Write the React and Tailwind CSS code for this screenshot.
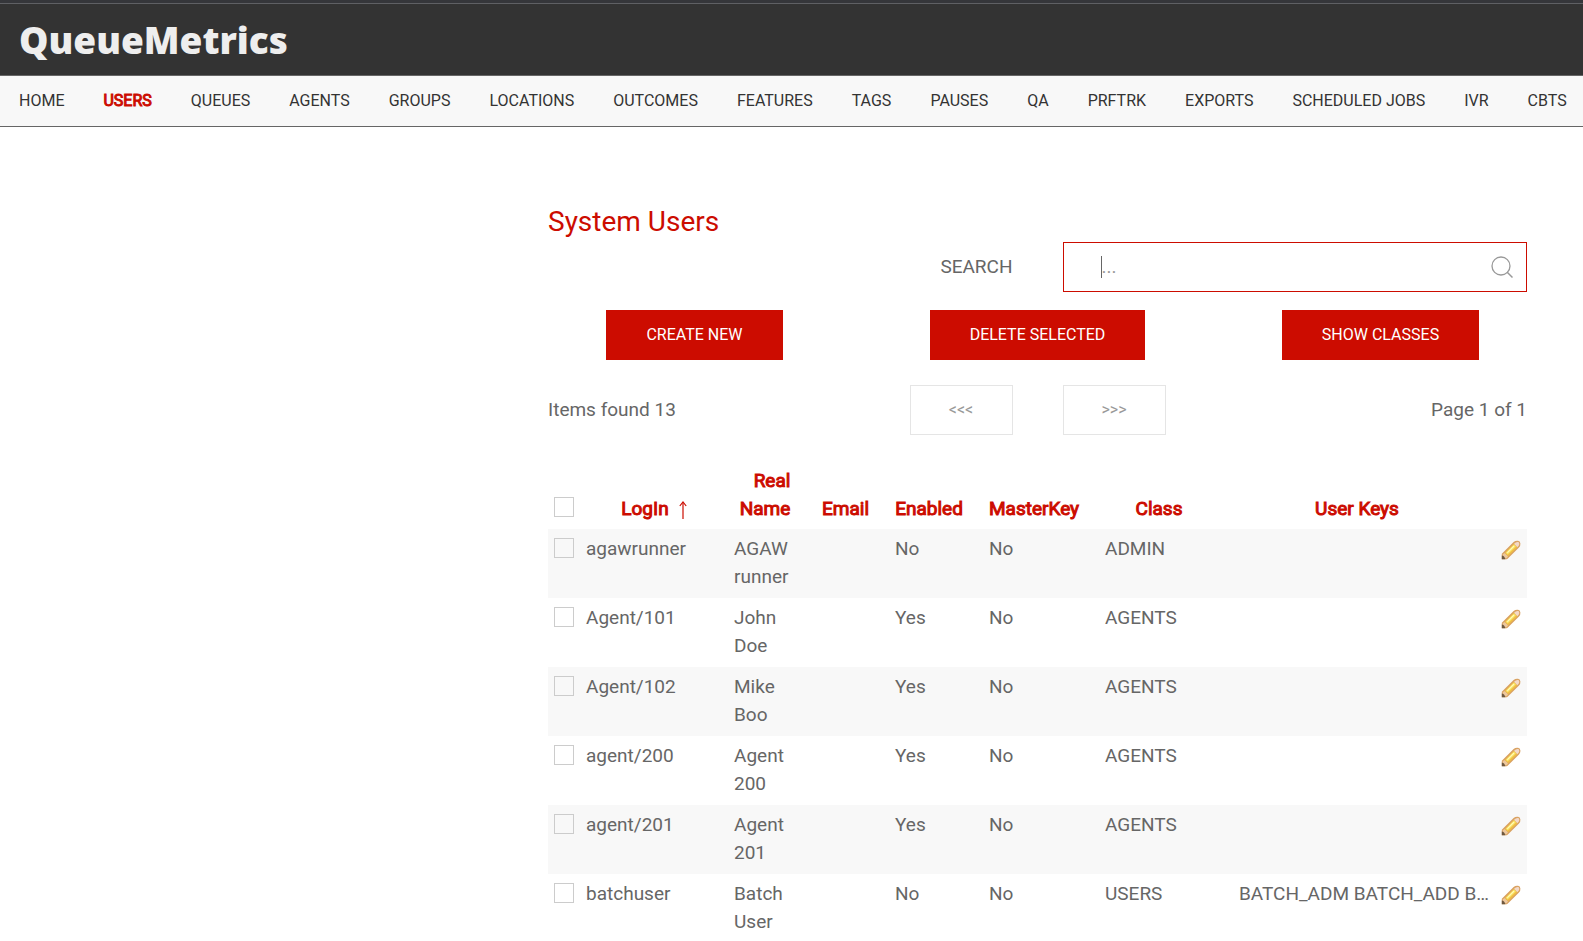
import { Fragment } from 'react';

const navItems = [
  'Home', 'Users', 'Queues', 'Agents', 'Groups', 'Locations', 'Outcomes', 'Features',
  'Tags', 'Pauses', 'QA', 'PrfTrk', 'Exports', 'Scheduled Jobs', 'IVR', 'CBTs',
];

const columns = ['Real Name', 'Email', 'Enabled', 'MasterKey', 'Class', 'User Keys'];

const users = [
  { login: 'agawrunner', name: ['AGAW', 'runner'], enabled: 'No', master: 'No', cls: 'ADMIN', keys: '' },
  { login: 'Agent/101', name: ['John', 'Doe'], enabled: 'Yes', master: 'No', cls: 'AGENTS', keys: '' },
  { login: 'Agent/102', name: ['Mike', 'Boo'], enabled: 'Yes', master: 'No', cls: 'AGENTS', keys: '' },
  { login: 'agent/200', name: ['Agent', '200'], enabled: 'Yes', master: 'No', cls: 'AGENTS', keys: '' },
  { login: 'agent/201', name: ['Agent', '201'], enabled: 'Yes', master: 'No', cls: 'AGENTS', keys: '' },
  { login: 'batchuser', name: ['Batch', 'User'], enabled: 'No', master: 'No', cls: 'USERS', keys: 'BATCH_ADM BATCH_ADD B…' },
];

const Pencil = () => (
  <svg viewBox="0 0 20 20" className="block size-5" aria-hidden="true">
    <path d="M0.8 19.2 L0.8 13.8 L12.6 2 Q14.6 0.4 17 0.8 Q19.2 1.2 19.4 3.4 Q19.6 5.6 18 7.4 L6.6 18.8 Q5.6 19.4 4.6 19.3 Z" fill="#d9a263" />
    <path d="M1.6 18.4 L1.8 14.2 L3.8 13 L7 16.2 L5.6 18.2 Z" fill="#edc79c" />
    <path d="M3.8 13 L13 3.8 L16.4 7.2 L7.2 16.2 Z" fill="#f0bf45" />
    <path d="M4.8 12.8 L13 4.6 L14.8 6.4 L6.6 14.6 Z" fill="#fbe76a" />
    <path d="M6 12.4 L12.6 5.8 L13.3 6.5 L6.7 13.1 Z" fill="#fffbc4" />
    <path d="M13 3.8 Q15.4 1.4 17.2 2 Q19 3 17.8 5.6 L16.4 7.2 Z" fill="#f3d9c8" />
    <path d="M0.8 19.2 L0.8 15.6 Q3.4 15.8 4.4 19.3 Z" fill="#6e5840" />
  </svg>
);

const SearchIcon = () => (
  <svg viewBox="0 0 22 22" className="size-[22px]" fill="none" stroke="#999" aria-hidden="true">
    <circle cx="10" cy="10" r="9" strokeWidth="1.3" />
    <path d="M16 16 L21.5 21.5" strokeWidth="1.5" />
  </svg>
);

const SortArrow = () => (
  <svg viewBox="0 0 8 18" className="ml-2.5 inline-block h-[18px] w-2 align-[-4px]" fill="none" stroke="#cc0c00" aria-hidden="true">
    <path d="M4 18 V2" strokeWidth="1.2" />
    <path d="M0.8 5 L4 1 L7.2 5" strokeWidth="1.2" />
  </svg>
);

const Checkbox = ({ label }) => (
  <input
    type="checkbox"
    aria-label={label}
    className="block size-5 appearance-none border border-[#ccc] bg-transparent"
  />
);

const PrimaryButton = ({ children }) => (
  <button type="button" className="h-[50px] bg-[#cc0c00] px-10 text-base text-white uppercase">
    {children}
  </button>
);

const PagerButton = ({ label, children }) => (
  <button
    type="button"
    aria-label={label}
    disabled
    className="h-[50px] w-[103px] border border-[#e5e5e5] text-base text-[#999]"
  >
    {children}
  </button>
);

const Header = () => (
  <header>
    <div className="h-1 border-b border-[#5f6064] bg-[#35363a]" />
    <div className="flex h-[72px] items-center border-b border-[#666] bg-[#333] px-[19px]">
      <a href="#" className="font-['Open_Sans',sans-serif] text-[37px] leading-9 font-extrabold text-[#eee]">
        QueueMetrics
      </a>
    </div>
    <nav className="flex h-[51px] items-center gap-[39px] border-b border-[#666] bg-[#f8f8f8] pl-[19px]">
      {navItems.map((item) => (
        <a
          key={item}
          href="#"
          className={`text-base leading-6 whitespace-nowrap uppercase ${
            item === 'Users' ? 'text-[#cc0c00] [-webkit-text-stroke:1px]' : 'text-[#333]'
          }`}
        >
          {item}
        </a>
      ))}
    </nav>
  </header>
);

const UsersTable = () => (
  <table className="mt-8 w-full table-fixed">
    <colgroup>
      <col className="w-8" />
      <col className="w-[148px]" />
      <col className="w-[88px]" />
      <col className="w-[73px]" />
      <col className="w-[94px]" />
      <col className="w-[116px]" />
      <col className="w-[134px]" />
      <col />
      <col className="w-8" />
    </colgroup>
    <thead>
      <tr className="align-bottom text-[#cc0c00]">
        <th className="px-1.5 pb-3">
          <Checkbox label="Select all" />
        </th>
        <th className="px-1.5 pb-1.5 font-normal">
          <span className="[-webkit-text-stroke:1px]">LogIn</span>
          <SortArrow />
        </th>
        {columns.map((column) => (
          <th key={column} className="px-1.5 pb-1.5 font-normal [-webkit-text-stroke:1px]">
            <span className="pr-3.5">{column}</span>
          </th>
        ))}
        <th />
      </tr>
    </thead>
    <tbody>
      {users.map((user) => (
        <tr key={user.login} className="h-[69px] align-top odd:bg-[#f8f8f8]">
          <td className="px-1.5 pt-[9px]">
            <Checkbox label={`Select ${user.login}`} />
          </td>
          <td className="px-1.5 pt-1.5">{user.login}</td>
          <td className="px-1.5 pt-1.5">
            {user.name.map((part, i) => (
              <Fragment key={part}>
                {i > 0 && <br />}
                {part}
              </Fragment>
            ))}
          </td>
          <td />
          <td className="px-1.5 pt-1.5">{user.enabled}</td>
          <td className="px-1.5 pt-1.5">{user.master}</td>
          <td className="px-1.5 pt-1.5">{user.cls}</td>
          <td className="pt-1.5 pl-1.5 whitespace-nowrap">{user.keys}</td>
          <td className="px-1.5 pt-[11px]">
            <a href="#" aria-label={`Edit ${user.login}`}>
              <Pencil />
            </a>
          </td>
        </tr>
      ))}
    </tbody>
  </table>
);

export default function App() {
  return (
    <div className="h-screen overflow-hidden bg-white font-[Roboto,sans-serif] text-[#666]">
      <Header />
      <div className="flex px-14 pt-[75px]">
        <aside className="w-[492px] shrink-0" />
        <main className="min-w-0 grow text-[19px] leading-7">
          <h1 className="text-[28px] leading-10 text-[#cc0c00]">System Users</h1>
          <div className="grid grid-cols-2 items-center gap-[50px]">
            <label htmlFor="search" className="text-right uppercase">
              Search
            </label>
            <div className="flex h-[50px] items-center border border-[#cc0c00] pr-[13px] pl-[37px]">
              <span className="h-[22px] w-px bg-[#666]" />
              <input
                id="search"
                type="text"
                placeholder="..."
                className="min-w-0 grow outline-none placeholder:text-[#999]"
              />
              <SearchIcon />
            </div>
          </div>
          <div className="mt-[18px] grid grid-cols-3 justify-items-center gap-[50px]">
            <PrimaryButton>Create new</PrimaryButton>
            <PrimaryButton>Delete selected</PrimaryButton>
            <PrimaryButton>Show classes</PrimaryButton>
          </div>
          <div className="mt-[25px] grid grid-cols-4 items-center gap-[50px]">
            <span>Items found 13</span>
            <div className="text-right">
              <PagerButton label="Previous page">&lt;&lt;&lt;</PagerButton>
            </div>
            <div>
              <PagerButton label="Next page">&gt;&gt;&gt;</PagerButton>
            </div>
            <span className="text-right">Page 1 of 1</span>
          </div>
          <UsersTable />
        </main>
      </div>
    </div>
  );
}
